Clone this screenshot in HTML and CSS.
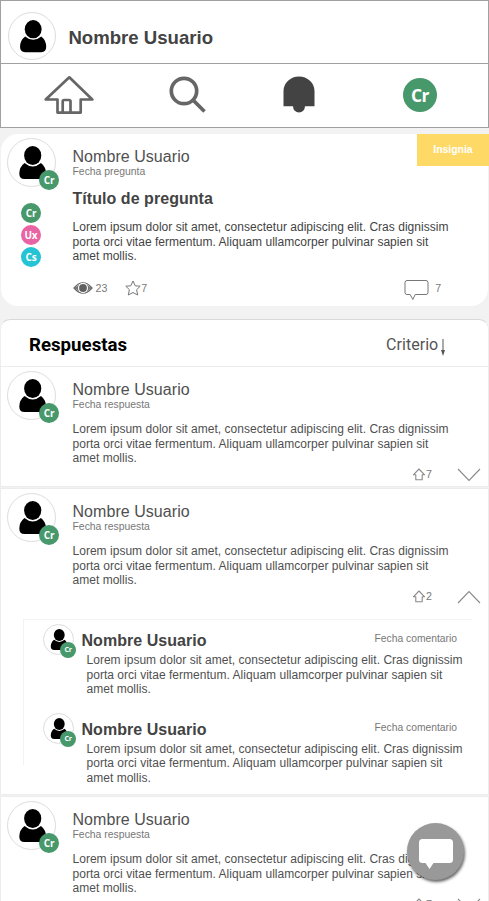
FILE: index.html
```html
<!DOCTYPE html>
<html lang="es">
<head>
<meta charset="utf-8">
<title>Pregunta</title>
<link rel="stylesheet" href="styles.css">
</head>
<body>
<svg class="defs" width="0" height="0">
  <symbol id="person" viewBox="0 0 49 49">
    <ellipse cx="25.7" cy="17.5" rx="8.6" ry="9.4"/>
    <path d="M17.5 25Q12.3 29 12.3 35.500Q12.300 41 17.500 41H34Q39 41 39 35.500Q39 29 34 25Q30 28.400 25.700 28.400Q21.500 28.400 17.500 25Z"/>
  </symbol>
  <symbol id="up" viewBox="0 0 14 13">
    <path d="M7 1L12.600 6.800H10.200V11.800H3.800V6.800H1.400Z" fill="none" stroke="#8a8a8a" stroke-width="1.100" stroke-linejoin="round"/>
  </symbol>
</svg>
<header class="top">
  <div class="profile">
    <div class="avatar"><svg><use href="#person"/></svg></div>
    <h1>Nombre Usuario</h1>
  </div>
  <nav class="nav">
    <a><svg width="50" height="40" viewBox="0 0 50 40"><g fill="none" stroke="#666" stroke-width="2.700" stroke-linejoin="round"><path d="M25.300 2.300L48.300 24.500H36.700V37.600H13.500V24.500H1.700Z"/><path d="M18.700 37V26.500Q18.700 25 20.200 25H25Q26.500 25 26.500 26.500V37"/></g></svg></a>
    <a><svg width="38" height="38" viewBox="0 0 38 38"><g fill="none" stroke="#666" stroke-width="3.700"><circle cx="15" cy="15" r="12.700"/><path d="M24.500 24.500L35.500 35.500"/></g></svg></a>
    <a><svg width="32" height="37" viewBox="0 0 32 37"><path fill="#434343" d="M.500 30.300V15A15.500 14.500 0 0 1 31.500 15V30.300H22A6 6.200 0 0 1 10 30.300Z"/></svg></a>
    <a><span class="tag tag-lg">Cr</span></a>
  </nav>
</header>
<main>
  <article class="question">
    <span class="insignia">Insignia</span>
    <div class="side">
      <div class="avatar"><svg><use href="#person"/></svg><span class="tag pin">Cr</span></div>
      <div class="tags"><span class="tag">Cr</span><span class="tag ux">Ux</span><span class="tag cs">Cs</span></div>
    </div>
    <div class="content">
      <div class="name">Nombre Usuario</div>
      <div class="date">Fecha pregunta</div>
      <h2>Título de pregunta</h2>
      <p>Lorem ipsum dolor sit amet, consectetur adipiscing elit. Cras dignissim<br>porta orci vitae fermentum. Aliquam ullamcorper pulvinar sapien sit<br>amet mollis.</p>
      <div class="stats">
        <svg width="20" height="14" viewBox="0 0 20 14"><path d="M1 7Q10-3.500 19 7Q10 17.500 1 7Z" fill="none" stroke="#666" stroke-width="1.200"/><path d="M1 7L6.500 3.500V10.500ZM19 7L13.500 3.500V10.500Z" fill="#777"/><circle cx="10" cy="7" r="5" fill="#fff"/><circle cx="10" cy="7" r="3.900" fill="#606060"/></svg>
        <span class="views">23</span>
        <svg width="16" height="16" viewBox="0 0 16 16"><path d="M8 1L10.200 5.800L15.200 6.200L11.600 9.700L12.700 15L8 12.500L3.300 15L4.400 9.700L.800 6.200L5.800 5.800Z" fill="none" stroke="#777" stroke-width="1"/></svg>
        <span>7</span>
        <svg class="bubble" width="25" height="22" viewBox="0 0 25 22"><path d="M3 1.500H22Q24 1.500 24 3.500V13.500Q24 15.500 22 15.500H11.200L8.800 20.500L6.200 15.500H3Q1 15.500 1 13.500V3.500Q1 1.500 3 1.500Z" fill="none" stroke="#777" stroke-width="1"/></svg>
        <span>7</span>
      </div>
    </div>
  </article>
  <section class="answers">
    <div class="bar">
      <h3>Respuestas</h3>
      <span class="sort">Criterio</span>
      <svg width="8" height="19" viewBox="0 0 8 19"><path d="M4 1V12" stroke="#555" stroke-width="1"/><path d="M2 12H6L4 18Z" fill="#555"/></svg>
    </div>
    <article class="answer">
      <div class="avatar"><svg><use href="#person"/></svg><span class="tag pin">Cr</span></div>
      <div class="content">
        <div class="name">Nombre Usuario</div>
        <div class="date">Fecha respuesta</div>
        <p>Lorem ipsum dolor sit amet, consectetur adipiscing elit. Cras dignissim<br>porta orci vitae fermentum. Aliquam ullamcorper pulvinar sapien sit<br>amet mollis.</p>
        <div class="votes"><svg width="14" height="13"><use href="#up"/></svg><span>7</span><svg class="chev" width="24" height="14" viewBox="0 0 24 14"><path d="M1 1L12 12.500L23 1" fill="none" stroke="#888" stroke-width="1.100"/></svg></div>
      </div>
    </article>
    <article class="answer open">
      <div class="avatar"><svg><use href="#person"/></svg><span class="tag pin">Cr</span></div>
      <div class="content">
        <div class="name">Nombre Usuario</div>
        <div class="date">Fecha respuesta</div>
        <p>Lorem ipsum dolor sit amet, consectetur adipiscing elit. Cras dignissim<br>porta orci vitae fermentum. Aliquam ullamcorper pulvinar sapien sit<br>amet mollis.</p>
        <div class="votes"><svg width="14" height="13"><use href="#up"/></svg><span>2</span><svg class="chev" width="24" height="14" viewBox="0 0 24 14"><path d="M1 13L12 1.500L23 13" fill="none" stroke="#888" stroke-width="1.100"/></svg></div>
      </div>
      <div class="comments">
        <div class="comment">
          <div class="avatar small"><svg><use href="#person"/></svg><span class="tag pin">Cr</span></div>
          <div class="comment-body">
            <div class="comment-head"><h4>Nombre Usuario</h4><span>Fecha comentario</span></div>
            <p>Lorem ipsum dolor sit amet, consectetur adipiscing elit. Cras dignissim<br>porta orci vitae fermentum. Aliquam ullamcorper pulvinar sapien sit<br>amet mollis.</p>
          </div>
        </div>
        <div class="comment">
          <div class="avatar small"><svg><use href="#person"/></svg><span class="tag pin">Cr</span></div>
          <div class="comment-body">
            <div class="comment-head"><h4>Nombre Usuario</h4><span>Fecha comentario</span></div>
            <p>Lorem ipsum dolor sit amet, consectetur adipiscing elit. Cras dignissim<br>porta orci vitae fermentum. Aliquam ullamcorper pulvinar sapien sit<br>amet mollis.</p>
          </div>
        </div>
      </div>
    </article>
    <article class="answer">
      <div class="avatar"><svg><use href="#person"/></svg><span class="tag pin">Cr</span></div>
      <div class="content">
        <div class="name">Nombre Usuario</div>
        <div class="date">Fecha respuesta</div>
        <p>Lorem ipsum dolor sit amet, consectetur adipiscing elit. Cras dignissim<br>porta orci vitae fermentum. Aliquam ullamcorper pulvinar sapien sit<br>amet mollis.</p>
        <div class="votes"><svg width="14" height="13"><use href="#up"/></svg><span>7</span><svg class="chev" width="24" height="14" viewBox="0 0 24 14"><path d="M1 1L12 12.500L23 1" fill="none" stroke="#888" stroke-width="1.100"/></svg></div>
      </div>
    </article>
  </section>
</main>
<button class="fab"><svg width="36" height="32" viewBox="0 0 36 32"><path fill="#fff" d="M4.500 1H31.500Q35 1 35 4.500V21.500Q35 25 31.500 25H15.500L11.500 31L7.500 25H4.500Q1 25 1 21.500V4.500Q1 1 4.500 1Z"/></svg></button>
</body>
</html>
```
FILE: styles.css
```css
* { box-sizing: border-box; }
body {
  margin: 0;
  width: 489px;
  height: 901px;
  overflow: hidden;
  background: #f2f2f2;
  font-family: "Liberation Sans", Arial, sans-serif;
  color: #434343;
}
h1, h2, h3, h4, p { margin: 0; }
svg { display: block; flex: none; }
.defs { position: absolute; }

.top { height: 128px; background: #fff; border: 1px solid #a0a0a0; }
.profile { display: flex; height: 63px; padding: 11px 0 0 7px; border-bottom: 1px solid #a0a0a0; }
.profile .avatar, .profile .avatar svg { width: 48px; height: 48px; }
.profile h1 { margin: 15px 0 0 12.4px; font-size: 18.6px; line-height: 22px; }
.nav { display: flex; align-items: flex-start; height: 63px; padding: 11px 0 0 43px; }
.nav a:nth-child(2) { margin: 1px 0 0 75px; }
.nav a:nth-child(3) { margin: 1px 0 0 75.500px; }
.nav a:nth-child(4) { margin: 3px 0 0 88.500px; }

.avatar { position: relative; flex: none; width: 49px; height: 49px; border: 1px solid #ddd; border-radius: 50%; background: #fff; }
.avatar svg { width: 49px; height: 49px; margin: -1px; fill: #000; }
.avatar.small { width: 31px; height: 31px; }
.avatar.small svg { width: 31px; height: 31px; }
.tag {
  display: flex; align-items: center; justify-content: center;
  width: 20px; height: 20px; border-radius: 50%;
  background: #47986b; color: #fff;
  font: bold 10px/20px "Open Sans", sans-serif;
  letter-spacing: -.2px;
}
.tag.ux { background: #e964a4; }
.tag.cs { background: #25c4d5; }
.tag-lg { width: 34px; height: 34px; font-size: 17.5px; line-height: 34px; letter-spacing: -.5px; }
.pin { position: absolute; left: 31px; top: 31px; }
.small .pin { left: 16px; top: 17px; width: 16px; height: 16px; font-size: 7px; line-height: 16px; }

.question { position: relative; display: flex; height: 172px; margin: 6px 1px 0; padding: 4px 0 0 6px; background: #fff; border-radius: 17px; }
.insignia { position: absolute; top: 0; right: -1px; width: 72px; height: 32px; background: #ffd966; color: #fff; font-weight: bold; font-size: 10.4px; line-height: 31px; text-align: center; }
.tags { display: grid; gap: 2px; margin: 16px 0 0 14px; }
.content { margin: 10px 0 0 16.5px; flex: 1; }
.name { font-size: 16px; line-height: 18px; letter-spacing: .05px; color: #505050; }
.date { font-size: 10.4px; line-height: 12px; color: #777; }
.content h2 { margin-top: 11px; font-size: 16px; line-height: 20px; letter-spacing: .05px; }
p { font-size: 12px; line-height: 14.67px; letter-spacing: .025px; white-space: nowrap; }
.content h2 + p { margin-top: 11px; }
.stats { display: flex; align-items: center; margin-top: 12px; height: 24px; font-size: 10.67px; color: #777; }
.views { margin: 0 18px 0 3px; }
.bubble { margin: 4px 6px 0 257px; }

.bar { display: flex; height: 47px; margin-top: 13px; padding: 0 41px 0 28px; background: #fff; border: 1px solid #d9d9d9; border-bottom: 0; border-radius: 10px 10px 0 0; border-left-color: #eee; border-right-color: #eee; font-family: Roboto, sans-serif; }
.bar h3 { margin-top: 14px; font-size: 18.67px; line-height: 22px; color: #000; }
.sort { margin: 15px .7px 0 auto; font-size: 16px; line-height: 20px; letter-spacing: .05px; color: #555; }
.bar svg { margin-top: 18px; }

.answer { display: grid; grid-template-columns: 49px 1fr; height: 121px; margin-bottom: 1px; padding: 4px 0 0 6px; background: #fff; border: 1px solid #ececec; align-content: start; }
.answer.open { height: 307px; }
.answer .content p { margin-top: 11px; }
.answer p { color: #505050; }
.votes { display: flex; align-items: center; margin: 1px 7px 0 auto; height: 14px; width: 69px; font-size: 10.67px; color: #777; }
.chev { margin: 1px 0 0 auto; }
.comments { grid-column: 1 / 3; margin: 16px 16px 0 16px; height: 146px; border-top: 1px solid #f3f3f3; border-left: 1px solid #f3f3f3; }
.comment { display: flex; height: 88.5px; padding: 4px 0 0 19px; }
.comment-body { flex: 1; padding: 8px 0 0 7.5px; }
.comment-head { display: flex; justify-content: space-between; padding-right: 15px; }
.comment-head h4 { font-size: 16px; line-height: 18px; letter-spacing: .04px; }
.comment-head span { font-size: 10.3px; line-height: 14px; color: #777; }
.comment p { margin: 3px 0 0 5px; }

.fab { position: absolute; left: 407px; top: 823px; display: flex; justify-content: center; width: 57px; height: 57px; padding: 15px 0 0; border: 0; border-radius: 50%; background: #999; box-shadow: 1px 2px 3px rgba(0, 0, 0, .6); }
```
